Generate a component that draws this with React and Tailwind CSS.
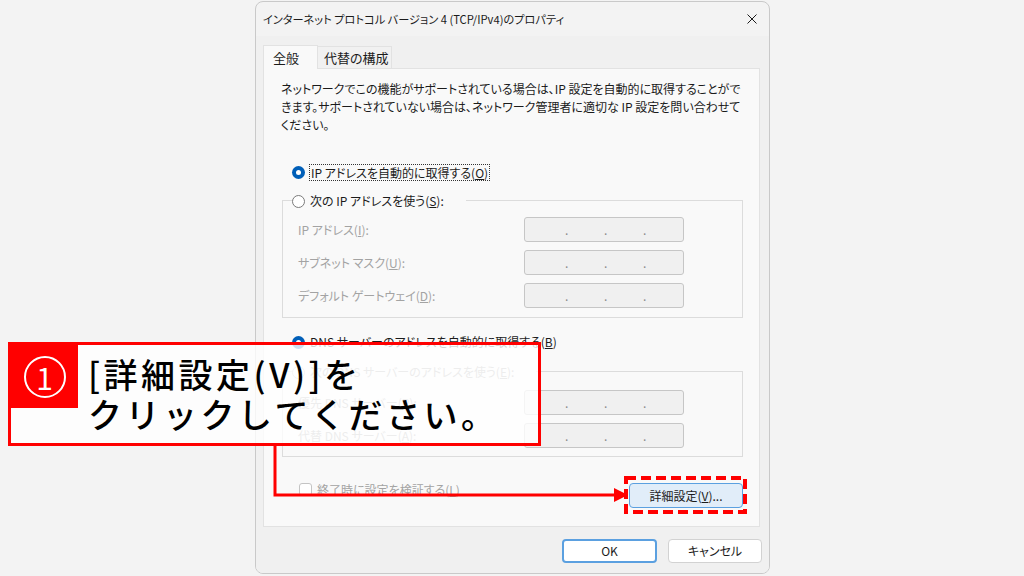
import React from 'react';

const Radio = ({ checked, disabled }) =>
  checked ? (
    <span className="flex h-[13px] w-[13px] shrink-0 items-center justify-center rounded-full bg-[#005fb8]">
      <span className="h-[5px] w-[5px] rounded-full bg-white" />
    </span>
  ) : (
    <span
      className={`h-[13px] w-[13px] shrink-0 rounded-full border bg-white ${
        disabled ? 'border-[#c4c4c4]' : 'border-[#7a7a7a]'
      }`}
    />
  );

const IpBox = () => (
  <div className="flex h-[25px] w-[160px] items-center rounded-[3px] border border-[#c6c6c6] bg-[#f0f0f0] pl-[40px] text-[#8a8a8a]">
    <span className="w-[39px]">.</span>
    <span className="w-[39px]">.</span>
    <span>.</span>
  </div>
);

const Field = ({ label, k, tail }) => (
  <div className="flex h-[25px] items-center">
    <span className="w-[226px] text-[#a3a3a3]">
      {label}(<u>{k}</u>){tail}
    </span>
    <IpBox />
  </div>
);

export default function App() {
  return (
    <div className="relative h-[576px] w-[1024px] overflow-hidden bg-[#f3f3f3] font-['Noto_Sans_CJK_JP',sans-serif] text-[12px] text-[#1b1b1b] [font-feature-settings:'palt']">
      {/* Dialog */}
      <div className="ml-[255px] mt-px flex h-[573px] w-[515px] flex-col overflow-hidden rounded-[8px] border border-[#c9c9c9] bg-[#f3f3f3]">
        <div className="flex h-[34px] items-center justify-between pl-[7px] pr-[12px]">
          <span className="text-[11.2px]">インターネット プロトコル バージョン 4 (TCP/IPv4)のプロパティ</span>
          <svg width="10" height="10" viewBox="0 0 10 10">
            <path d="M0.5 0.5L9.5 9.5M9.5 0.5L0.5 9.5" stroke="#1b1b1b" strokeWidth="1" />
          </svg>
        </div>

        <div className="flex flex-1 flex-col bg-[#f0f0f0] px-[7px] pt-[9px]">
          {/* Tabs */}
          <div className="flex items-end">
            <div className="relative z-10 -mb-px flex h-[24px] w-[55px] items-center border-x border-t border-[#e2e2e2] bg-[#f9f9f9] pl-[9px] text-[13px]">
              全般
            </div>
            <div className="flex h-[22px] w-[74px] items-center border-r border-t border-[#e2e2e2] bg-[#f1f1f1] pl-[6px] text-[13px]">
              代替の構成
            </div>
          </div>

          {/* Panel */}
          <div className="flex h-[459px] w-[497px] flex-col border border-[#e2e2e2] bg-[#f9f9f9] pl-[17px] pt-[11px]">
            <p className="w-[462px] leading-[18px]">
              ネットワークでこの機能がサポートされている場合は、IP 設定を自動的に取得することができます。サポートされていない場合は、ネットワーク管理者に適切な IP 設定を問い合わせてください。
            </p>

            <div className="mt-[29px] flex h-[18px] items-center gap-[5px] pl-[11px]">
              <Radio checked />
              <span className="px-[1px] leading-[15px] outline outline-1 outline-dotted outline-[#333]">
                IP アドレスを自動的に取得する(<u>O</u>)
              </span>
            </div>

            <div className="ml-px mt-[19px] w-[461px] border border-[#dcdcdc] pb-[9px] pl-[15px]">
              <div className="-ml-[6px] -mt-[9px] flex h-[18px]">
                <span className="flex items-center gap-[5px] bg-[#f9f9f9] pr-[22px]">
                  <Radio />
                  <span>次の IP アドレスを使う(<u>S</u>):</span>
                </span>
              </div>
              <div className="mt-[7px] flex flex-col gap-[8px]">
                <Field label="IP アドレス" k="I" tail=":" />
                <Field label="サブネット マスク" k="U" tail=":" />
                <Field label="デフォルト ゲートウェイ" k="D" tail=":" />
              </div>
            </div>

            <div className="mt-[15px] flex h-[18px] items-center gap-[5px] pl-[11px]">
              <Radio checked />
              <span>DNS サーバーのアドレスを自動的に取得する(<u>B</u>)</span>
            </div>

            <div className="ml-px mt-[20px] w-[461px] border border-[#dcdcdc] pb-[8px] pl-[15px]">
              <div className="-ml-[6px] -mt-[9px] flex h-[18px]">
                <span className="flex items-center gap-[5px] bg-[#f9f9f9] pr-[22px] text-[#a3a3a3]">
                  <Radio disabled />
                  <span>次の DNS サーバーのアドレスを使う(<u>E</u>):</span>
                </span>
              </div>
              <div className="mt-[9px] flex flex-col gap-[8px]">
                <Field label="優先 DNS サーバー" k="P" tail=":" />
                <Field label="代替 DNS サーバー" k="A" tail=":" />
              </div>
            </div>

            <div className="mt-[26px] flex w-[462px] items-start justify-between">
              <div className="flex h-[13px] items-center gap-[5px] pl-[18px] text-[#a3a3a3]">
                <span className="h-[13px] w-[13px] rounded-[3px] border border-[#c4c4c4] bg-white" />
                <span>終了時に設定を検証する(<u>L</u>)</span>
              </div>
              <button className="flex h-[25px] w-[114px] items-center justify-center rounded-[4px] border border-[#5ba0e0] bg-[#e1edf9]">
                詳細設定(<u>V</u>)...
              </button>
            </div>
          </div>

          {/* Buttons */}
          <div className="mt-[12px] flex justify-end gap-[11px]">
            <button className="h-[24px] w-[95px] rounded-[4px] border-2 border-[#5ba0e0] bg-white">OK</button>
            <button className="h-[24px] w-[94px] rounded-[4px] border border-[#d2d2d2] bg-white">キャンセル</button>
          </div>
        </div>
      </div>

      {/* Callout */}
      <div className="absolute left-[8px] top-[342px] flex h-[104px] w-[533px] border-[3px] border-[#ff0000] bg-white/80 [font-feature-settings:normal]">
        <div className="flex h-[63px] w-[67px] shrink-0 items-center justify-center bg-[#ff0000]">
          <div className="flex h-[42px] w-[42px] items-center justify-center rounded-full border-2 border-white text-[30px] leading-none text-white">
            1
          </div>
        </div>
        <div className="ml-[10px] pt-[9px] text-[34px] font-medium leading-[40px] tracking-[3.5px] text-black">
          <div>[詳細設定(V)]を</div>
          <div>クリックしてください。</div>
        </div>
      </div>

      {/* Connector arrow */}
      <svg className="pointer-events-none absolute left-0 top-0" width="1024" height="576">
        <path d="M275 445 V495 H616" fill="none" stroke="#ff0000" strokeWidth="3" />
        <path d="M614 488 L628 495 L614 502 Z" fill="#ff0000" />
        <rect x="626" y="478" width="119" height="34" fill="none" stroke="#ff0000" strokeWidth="4" strokeDasharray="10 5" />
      </svg>
    </div>
  );
}
